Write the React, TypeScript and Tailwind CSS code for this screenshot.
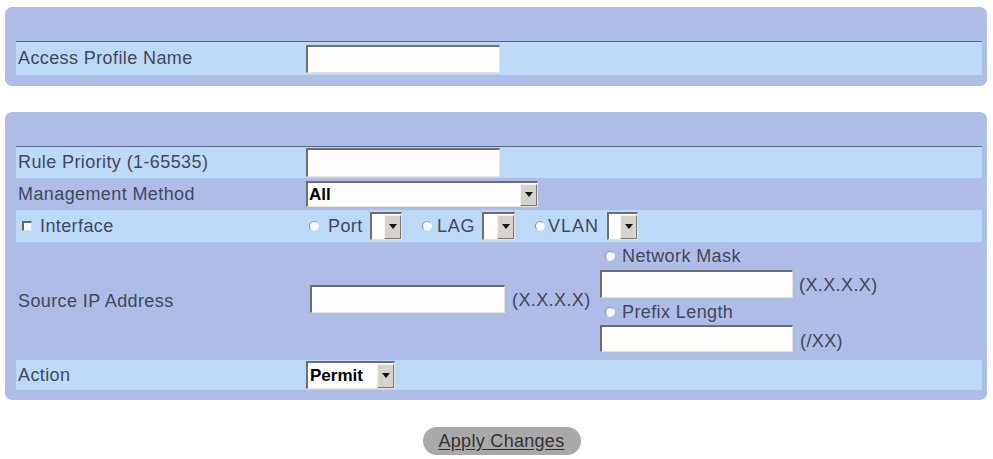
import React from "react";

const Arrow = () => (
  <svg width="8" height="5" viewBox="0 0 8 5" className="block">
    <path d="M0 0 H8 L4 5 Z" fill="#111" />
  </svg>
);

const DropButton = ({ h }: { h: string }) => (
  <span
    className={`flex ${h} w-[17px] items-center justify-center bg-[#d6d3cc] border-t border-l border-t-[#f2f2f2] border-l-[#f2f2f2] border-b border-r border-b-[#7a7a7a] border-r-[#7a7a7a]`}
  >
    <Arrow />
  </span>
);

const TextBox = ({ w, h }: { w: string; h: string }) => (
  <span
    className={`block ${w} ${h} bg-[#fdfdfb] border-t-2 border-l-2 border-t-[#6f6f6f] border-l-[#6f6f6f] border-b border-r border-b-[#e2e2e2] border-r-[#e2e2e2]`}
  />
);

const Radio = () => (
  <span className="inline-block w-[10px] h-[10px] rounded-full bg-[#f7f7f7] border border-t-[#9a9a9a] border-l-[#8a8a8a] border-r-[#f0f0f0] border-b-[#f0f0f0]" />
);

const SmallSelect = ({ w }: { w: string }) => (
  <span
    className={`flex h-[28px] ${w} items-center justify-end bg-[#fdfdfb] border-t-2 border-l-2 border-t-[#6f6f6f] border-l-[#6f6f6f] border-b border-r border-b-[#e2e2e2] border-r-[#e2e2e2]`}
  >
    <DropButton h="h-[24px]" />
  </span>
);

const Row = ({
  label,
  light,
  h,
  children,
}: {
  label: React.ReactNode;
  light?: boolean;
  h: string;
  children?: React.ReactNode;
}) => (
  <div className={`flex items-center ${h} ${light ? "bg-[#bcdaf7]" : ""}`}>
    <div className="w-[290px] pl-[2px]">{label}</div>
    <div className="flex items-center self-stretch">{children}</div>
  </div>
);

export default function App() {
  return (
    <div className="w-[993px] h-[459px] overflow-hidden bg-white pt-[7px] text-[18px] tracking-[0.4px] text-[#44475a] font-['Liberation_Sans',Arial,sans-serif]">
      {/* Profile name panel */}
      <div className="ml-[5px] w-[982px] rounded-[7px] bg-[#adbde8] pl-[11px] pr-[5px] pt-[34px] pb-[11px]">
        <div className="border-t border-[#56668a]">
          <Row label="Access Profile Name" light h="h-[33px]">
            <TextBox w="w-[194px]" h="h-[28px]" />
          </Row>
        </div>
      </div>

      {/* Rule panel */}
      <div className="mt-[26px] ml-[5px] w-[982px] rounded-[7px] bg-[#adbde8] pl-[11px] pr-[5px] pt-[34px] pb-[10px]">
        <div className="border-t border-[#56668a]">
          <Row label="Rule Priority (1-65535)" light h="h-[31px]">
            <TextBox w="w-[194px]" h="h-[29px]" />
          </Row>
          <Row label="Management Method" h="h-[32px]">
            <span className="flex h-[26px] w-[232px] items-center justify-between bg-[#fdfdfb] border-t-2 border-l-2 border-t-[#6f6f6f] border-l-[#6f6f6f] border-b border-r border-b-[#e2e2e2] border-r-[#e2e2e2] pl-[1px]">
              <span className="font-bold text-[17px] text-black tracking-normal">All</span>
              <DropButton h="h-[22px]" />
            </span>
          </Row>
          <Row
            light
            h="h-[32px]"
            label={
              <span className="flex items-center pl-[4px]">
                <span className="inline-block w-[10px] h-[10px] bg-[#f7f7f7] border-t-2 border-l-2 border-t-[#666] border-l-[#666] border-b border-r border-b-[#ddd] border-r-[#ddd] mr-[8px]" />
                Interface
              </span>
            }
          >
            <span className="flex items-center pl-[3px] whitespace-nowrap">
              <Radio />
              <span className="ml-[9px] inline-block w-[35px]">Port</span>
              <span className="ml-[7px]">
                <SmallSelect w="w-[32px]" />
              </span>
              <span className="ml-[20px] flex">
                <Radio />
              </span>
              <span className="ml-[5px] inline-block w-[38px] tracking-[0.8px]">LAG</span>
              <span className="ml-[7px]">
                <SmallSelect w="w-[33px]" />
              </span>
              <span className="ml-[20px] flex">
                <Radio />
              </span>
              <span className="ml-[3px] inline-block w-[52px] tracking-[1px]">VLAN</span>
              <span className="ml-[7px]">
                <SmallSelect w="w-[31px]" />
              </span>
            </span>
          </Row>
          <Row label="Source IP Address" h="h-[118px]">
            <span className="ml-[4px] self-center mt-[-4px]">
              <TextBox w="w-[195px]" h="h-[28px]" />
            </span>
            <span className="ml-[7px] self-center mt-[-2px] w-[88px]">(X.X.X.X)</span>
            <span className="flex flex-col self-start mt-[4px]">
              <span className="flex items-center h-[20px] pl-[5px]">
                <Radio />
                <span className="ml-[7px]">Network Mask</span>
              </span>
              <span className="flex items-center mt-[2px]">
                <TextBox w="w-[193px]" h="h-[28px]" />
                <span className="ml-[6px] mt-[4px]">(X.X.X.X)</span>
              </span>
              <span className="flex items-center h-[20px] pl-[5px] mt-[3px]">
                <Radio />
                <span className="ml-[7px]">Prefix Length</span>
              </span>
              <span className="flex items-center mt-[0px]">
                <TextBox w="w-[193px]" h="h-[27px]" />
                <span className="ml-[7px] mt-[6px]">(/XX)</span>
              </span>
            </span>
          </Row>
          <Row label="Action" light h="h-[30px]">
            <span className="flex h-[28px] w-[89px] items-center justify-between bg-[#fdfdfb] border-t-2 border-l-2 border-t-[#6f6f6f] border-l-[#6f6f6f] border-b border-r border-b-[#e2e2e2] border-r-[#e2e2e2] pl-[2px] self-center">
              <span className="font-bold text-[17px] text-black tracking-normal">Permit</span>
              <DropButton h="h-[24px]" />
            </span>
          </Row>
        </div>
      </div>

      <div className="mt-[27px] flex justify-center pl-[10px]">
        <button className="h-[28px] w-[158px] rounded-full bg-[#a9a9a9] text-[#333] underline underline-offset-2 tracking-[0.3px]">
          Apply Changes
        </button>
      </div>
    </div>
  );
}
